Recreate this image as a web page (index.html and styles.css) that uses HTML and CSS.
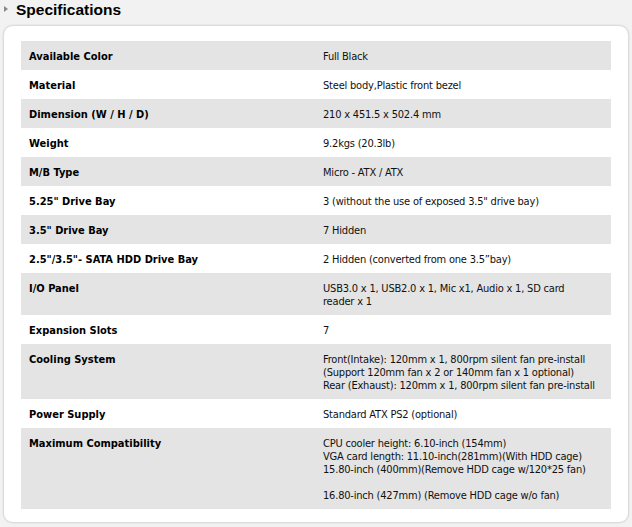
FILE: index.html
```html
<!DOCTYPE html>
<html>
<head>
<meta charset="utf-8">
<link rel="stylesheet" href="styles.css">
</head>
<body>
<div class="page">
  <h2 class="title"><span class="arrow"></span>Specifications</h2>
  <div class="card">
    <table class="specs">
      <tr class="alt"><th>Available Color</th><td>Full Black</td></tr>
      <tr><th>Material</th><td>Steel body,Plastic front bezel</td></tr>
      <tr class="alt"><th>Dimension (W / H / D)</th><td>210 x 451.5 x 502.4 mm</td></tr>
      <tr><th>Weight</th><td>9.2kgs (20.3lb)</td></tr>
      <tr class="alt"><th>M/B Type</th><td>Micro - ATX / ATX</td></tr>
      <tr><th>5.25" Drive Bay</th><td>3 (without the use of exposed 3.5" drive bay)</td></tr>
      <tr class="alt"><th>3.5" Drive Bay</th><td>7 Hidden</td></tr>
      <tr><th>2.5"/3.5"- SATA HDD Drive Bay</th><td>2 Hidden (converted from one 3.5”bay)</td></tr>
      <tr class="alt"><th>I/O Panel</th><td>USB3.0 x 1, USB2.0 x 1, Mic x1, Audio x 1, SD card reader x 1</td></tr>
      <tr><th>Expansion Slots</th><td>7</td></tr>
      <tr class="alt"><th>Cooling System</th><td>Front(Intake): 120mm x 1, 800rpm silent fan pre-install<br>(Support 120mm fan x 2 or 140mm fan x 1 optional)<br>Rear (Exhaust): 120mm x 1, 800rpm silent fan pre-install</td></tr>
      <tr><th>Power Supply</th><td>Standard ATX PS2 (optional)</td></tr>
      <tr class="alt"><th>Maximum Compatibility</th><td>CPU cooler height: 6.10-inch (154mm)<br>VGA card length: 11.10-inch(281mm)(With HDD cage)<br>15.80-inch (400mm)(Remove HDD cage w/120*25 fan)<br><br>16.80-inch (427mm) (Remove HDD cage w/o fan)</td></tr>
    </table>
  </div>
</div>
</body>
</html>
```

FILE: styles.css
```css
html, body {
  margin: 0;
  padding: 0;
  background: #f2f2f2;
}
.page {
  width: 632px;
  height: 527px;
  padding: 0 3px;
  box-sizing: border-box;
  font-family: "DejaVu Sans Condensed", "DejaVu Sans", sans-serif;
  font-size: 11px;
  color: #111;
}
.title {
  margin: 0;
  height: 25px;
  display: flex;
  align-items: flex-start;
  font-family: "Liberation Sans", Arial, sans-serif;
  font-weight: bold;
  font-size: 15.5px;
  line-height: 20px;
  color: #000;
  padding-left: 13px;
  position: relative;
}
.arrow {
  position: absolute;
  left: 1px;
  top: 6px;
  width: 0;
  height: 0;
  border-top: 3px solid transparent;
  border-bottom: 3px solid transparent;
  border-left: 4px solid #888;
}
.card {
  background: #fff;
  border: 1px solid #dcdcdc;
  border-radius: 10px;
  box-shadow: 0 0 2px rgba(0,0,0,0.12);
  padding: 15px 17px 13px 17px;
  height: 498px;
  box-sizing: border-box;
}
.specs {
  width: 590px;
  border-collapse: collapse;
  border-spacing: 0;
}
.specs th, .specs td {
  text-align: left;
  vertical-align: top;
  padding: 9px 8px 7px 8px;
  line-height: 13px;
}
.specs td {
  letter-spacing: -0.2px;
  padding-right: 14px;
}
.specs th {
  width: 278px;
  font-weight: bold;
  color: #000;
}
.specs tr.alt {
  background: #e4e4e4;
}
```
